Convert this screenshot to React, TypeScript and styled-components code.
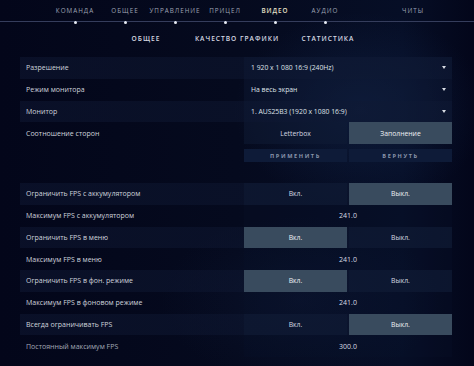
import React from "react";
import styled, { createGlobalStyle } from "styled-components";

const Global = createGlobalStyle`
  html, body { margin: 0; padding: 0; }
  body {
    width: 474px;
    height: 366px;
    overflow: hidden;
    background: #05081a;
    font-family: "Open Sans", "Noto Sans", sans-serif;
  }
`;

const Screen = styled.div`
  width: 474px;
  height: 366px;
  background:
    radial-gradient(ellipse 180px 140px at 360px 110px, rgba(30, 60, 110, 0.28), transparent 70%),
    radial-gradient(ellipse 200px 120px at 300px 300px, rgba(25, 45, 85, 0.2), transparent 70%),
    linear-gradient(90deg, #03061a 0%, #050a1e 50%, #060e26 85%, #03061a 100%);
  display: flex;
  flex-direction: column;
`;

const TopNav = styled.div`
  height: 21px;
  border-bottom: 1px solid #353d5c;
  display: flex;
  padding-left: 50px;
  box-sizing: content-box;
`;

const TopTab = styled.div<{ $active?: boolean; $gap?: number }>`
  position: relative;
  width: 50px;
  margin-left: ${(p) => p.$gap ?? 0}px;
  display: flex;
  justify-content: center;
  padding-top: 6px;
  font-size: 6.3px;
  letter-spacing: 1px;
  color: ${(p) => (p.$active ? "#e6e0c8" : "#9ea3b4")};
  font-weight: ${(p) => (p.$active ? 600 : 400)};
  white-space: nowrap;
`;

const Dot = styled.span`
  position: absolute;
  left: 50%;
  bottom: -2.5px;
  width: 3px;
  height: 3px;
  margin-left: -1.5px;
  border-radius: 50%;
  background: #e8ecf4;
`;

const SubNav = styled.div`
  height: 29px;
  display: flex;
  justify-content: center;
  align-items: center;
  padding-top: 2px;
`;

const SubTab = styled.div`
  width: 91px;
  text-align: center;
  font-size: 6.6px;
  font-weight: 600;
  letter-spacing: 1px;
  color: #d6d9e2;
  white-space: nowrap;
`;

const Panel = styled.div`
  margin: 4px 0 0 20px;
  width: 432px;
  display: flex;
  flex-direction: column;
`;

const Row = styled.div<{ $hl?: boolean }>`
  height: 21.75px;
  display: grid;
  grid-template-columns: 224px 208px;
  background: ${(p) =>
    p.$hl
      ? "linear-gradient(90deg, rgba(14,22,48,0.6), rgba(14,24,50,0.45))"
      : "transparent"};
`;

const Label = styled.div<{ $dim?: boolean }>`
  display: flex;
  align-items: center;
  padding-left: 6px;
  font-size: 7px;
  color: ${(p) => (p.$dim ? "#a3a8b6" : "#cfd3dc")};
  white-space: nowrap;
`;

const Dropdown = styled.div`
  display: flex;
  align-items: center;
  justify-content: space-between;
  padding: 0 6px 0 7px;
  background: rgba(16, 30, 56, 0.35);
  font-size: 6.8px;
  color: #dfe2e8;
  white-space: nowrap;
`;

const Caret = styled.span`
  width: 0;
  height: 0;
  border-left: 2.5px solid transparent;
  border-right: 2.5px solid transparent;
  border-top: 3px solid #d8dce4;
`;

const Toggle = styled.div`
  display: grid;
  grid-template-columns: 1fr 1fr;
  gap: 2px;
`;

const Option = styled.div<{ $on?: boolean }>`
  display: flex;
  align-items: center;
  justify-content: center;
  font-size: 6.8px;
  color: ${(p) => (p.$on ? "#eef0f4" : "#d4d8e0")};
  background: ${(p) => (p.$on ? "#394b5e" : "rgba(16, 28, 54, 0.5)")};
`;

const Value = styled.div`
  display: flex;
  align-items: center;
  justify-content: center;
  font-size: 7px;
  color: #d8dce4;
  background: rgba(12, 22, 44, 0.2);
`;

const ActionRow = styled.div`
  margin-top: 5px;
  height: 13px;
  display: grid;
  grid-template-columns: 224px 208px;
`;

const Actions = styled.div`
  grid-column: 2;
  display: grid;
  grid-template-columns: 1fr 1fr;
  gap: 2px;
`;

const ActionButton = styled.div`
  display: flex;
  align-items: center;
  justify-content: center;
  background: #0e1b38;
  font-size: 5.6px;
  font-weight: 700;
  letter-spacing: 1.6px;
  color: #8a95ab;
`;

const Spacer = styled.div`
  height: 21px;
`;

const tabs = ["КОМАНДА", "ОБЩЕЕ", "УПРАВЛЕНИЕ", "ПРИЦЕЛ", "ВИДЕО", "АУДИО"];

type FpsRow =
  | { kind: "toggle"; label: string; on: "on" | "off" }
  | { kind: "value"; label: string; value: string };

const fpsRows: FpsRow[] = [
  { kind: "toggle", label: "Ограничить FPS с аккумулятором", on: "off" },
  { kind: "value", label: "Максимум FPS с аккумулятором", value: "241.0" },
  { kind: "toggle", label: "Ограничить FPS в меню", on: "on" },
  { kind: "value", label: "Максимум FPS в меню", value: "241.0" },
  { kind: "toggle", label: "Ограничить FPS в фон. режиме", on: "on" },
  { kind: "value", label: "Максимум FPS в фоновом режиме", value: "241.0" },
  { kind: "toggle", label: "Всегда ограничивать FPS", on: "off" },
  { kind: "value", label: "Постоянный максимум FPS", value: "300.0" },
];

export default function App() {
  return (
    <>
      <Global />
      <Screen>
        <TopNav>
          {tabs.map((t) => (
            <TopTab key={t} $active={t === "ВИДЕО"}>
              {t}
              <Dot />
            </TopTab>
          ))}
          <TopTab $gap={38}>ЧИТЫ</TopTab>
        </TopNav>
        <SubNav>
          <SubTab>ОБЩЕЕ</SubTab>
          <SubTab>КАЧЕСТВО ГРАФИКИ</SubTab>
          <SubTab>СТАТИСТИКА</SubTab>
        </SubNav>
        <Panel>
          <Row $hl>
            <Label>Разрешение</Label>
            <Dropdown>
              1 920 x 1 080 16:9 (240Hz)
              <Caret />
            </Dropdown>
          </Row>
          <Row>
            <Label>Режим монитора</Label>
            <Dropdown>
              На весь экран
              <Caret />
            </Dropdown>
          </Row>
          <Row $hl>
            <Label>Монитор</Label>
            <Dropdown>
              1. AUS25B3 (1920 x 1080 16:9)
              <Caret />
            </Dropdown>
          </Row>
          <Row>
            <Label>Соотношение сторон</Label>
            <Toggle>
              <Option>Letterbox</Option>
              <Option $on>Заполнение</Option>
            </Toggle>
          </Row>
          <ActionRow>
            <Actions>
              <ActionButton>ПРИМЕНИТЬ</ActionButton>
              <ActionButton>ВЕРНУТЬ</ActionButton>
            </Actions>
          </ActionRow>
          <Spacer />
          {fpsRows.map((r, i) => (
            <Row key={r.label} $hl={r.kind === "toggle"}>
              <Label $dim={i === 7}>{r.label}</Label>
              {r.kind === "toggle" ? (
                <Toggle>
                  <Option $on={r.on === "on"}>Вкл.</Option>
                  <Option $on={r.on === "off"}>Выкл.</Option>
                </Toggle>
              ) : (
                <Value>{r.value}</Value>
              )}
            </Row>
          ))}
        </Panel>
      </Screen>
    </>
  );
}
